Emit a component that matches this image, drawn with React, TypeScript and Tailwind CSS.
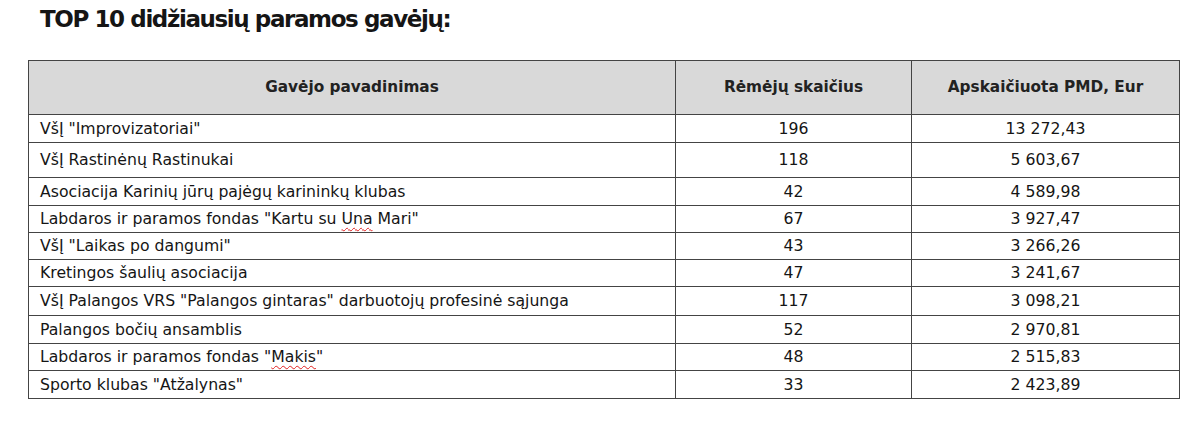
const rows: { name: React.ReactNode; count: string; amount: string; h: string }[] = [
  { name: 'VšĮ "Improvizatoriai"', count: "196", amount: "13 272,43", h: "h-[28px]" },
  { name: "VšĮ Rastinėnų Rastinukai", count: "118", amount: "5 603,67", h: "h-[35px]" },
  { name: "Asociacija Karinių jūrų pajėgų karininkų klubas", count: "42", amount: "4 589,98", h: "h-[28px]" },
  {
    name: (
      <>
        Labdaros ir paramos fondas "Kartu su{" "}
        <span className="underline decoration-wavy decoration-[#e02020] decoration-1 underline-offset-[3px]">Una</span> Mari"
      </>
    ),
    count: "67",
    amount: "3 927,47",
    h: "h-[27px]",
  },
  { name: 'VšĮ "Laikas po dangumi"', count: "43", amount: "3 266,26", h: "h-[27px]" },
  { name: "Kretingos šaulių asociacija", count: "47", amount: "3 241,67", h: "h-[27px]" },
  {
    name: 'VšĮ Palangos VRS "Palangos gintaras" darbuotojų profesinė sąjunga',
    count: "117",
    amount: "3 098,21",
    h: "h-[29px]",
  },
  { name: "Palangos bočių ansamblis", count: "52", amount: "2 970,81", h: "h-[28px]" },
  {
    name: (
      <>
        Labdaros ir paramos fondas "
        <span className="underline decoration-wavy decoration-[#e02020] decoration-1 underline-offset-[3px]">Makis</span>"
      </>
    ),
    count: "48",
    amount: "2 515,83",
    h: "h-[27px]",
  },
  { name: 'Sporto klubas "Atžalynas"', count: "33", amount: "2 423,89", h: "h-[28px]" },
];

export default function App() {
  return (
    <div className="w-[1200px] h-[431px] bg-white text-[#151515] font-['DejaVu_Sans',sans-serif]">
      <h1 className="pl-[40px] pt-[4px] text-[23px] leading-[30px] font-bold tracking-[-1.4px]">
        TOP 10 didžiausių paramos gavėjų:
      </h1>
      <table className="ml-[28px] mt-[26px] w-[1152px] border-collapse text-[15.7px] table-fixed">
        <thead>
          <tr className="h-[54px] bg-[#d9d9d9]">
            <th className="w-[647px] border border-[#444] text-[15.3px] font-semibold text-[#222]">Gavėjo pavadinimas</th>
            <th className="w-[236px] border border-[#444] text-[15.3px] font-semibold text-[#222]">Rėmėjų skaičius</th>
            <th className="border border-[#444] text-[15.3px] font-semibold text-[#222]">Apskaičiuota PMD, Eur</th>
          </tr>
        </thead>
        <tbody>
          {rows.map((r, i) => (
            <tr key={i} className={r.h}>
              <td className="border border-[#444] pl-[11px] whitespace-nowrap">{r.name}</td>
              <td className="border border-[#444] text-center">{r.count}</td>
              <td className="border border-[#444] text-center">{r.amount}</td>
            </tr>
          ))}
        </tbody>
      </table>
    </div>
  );
}
